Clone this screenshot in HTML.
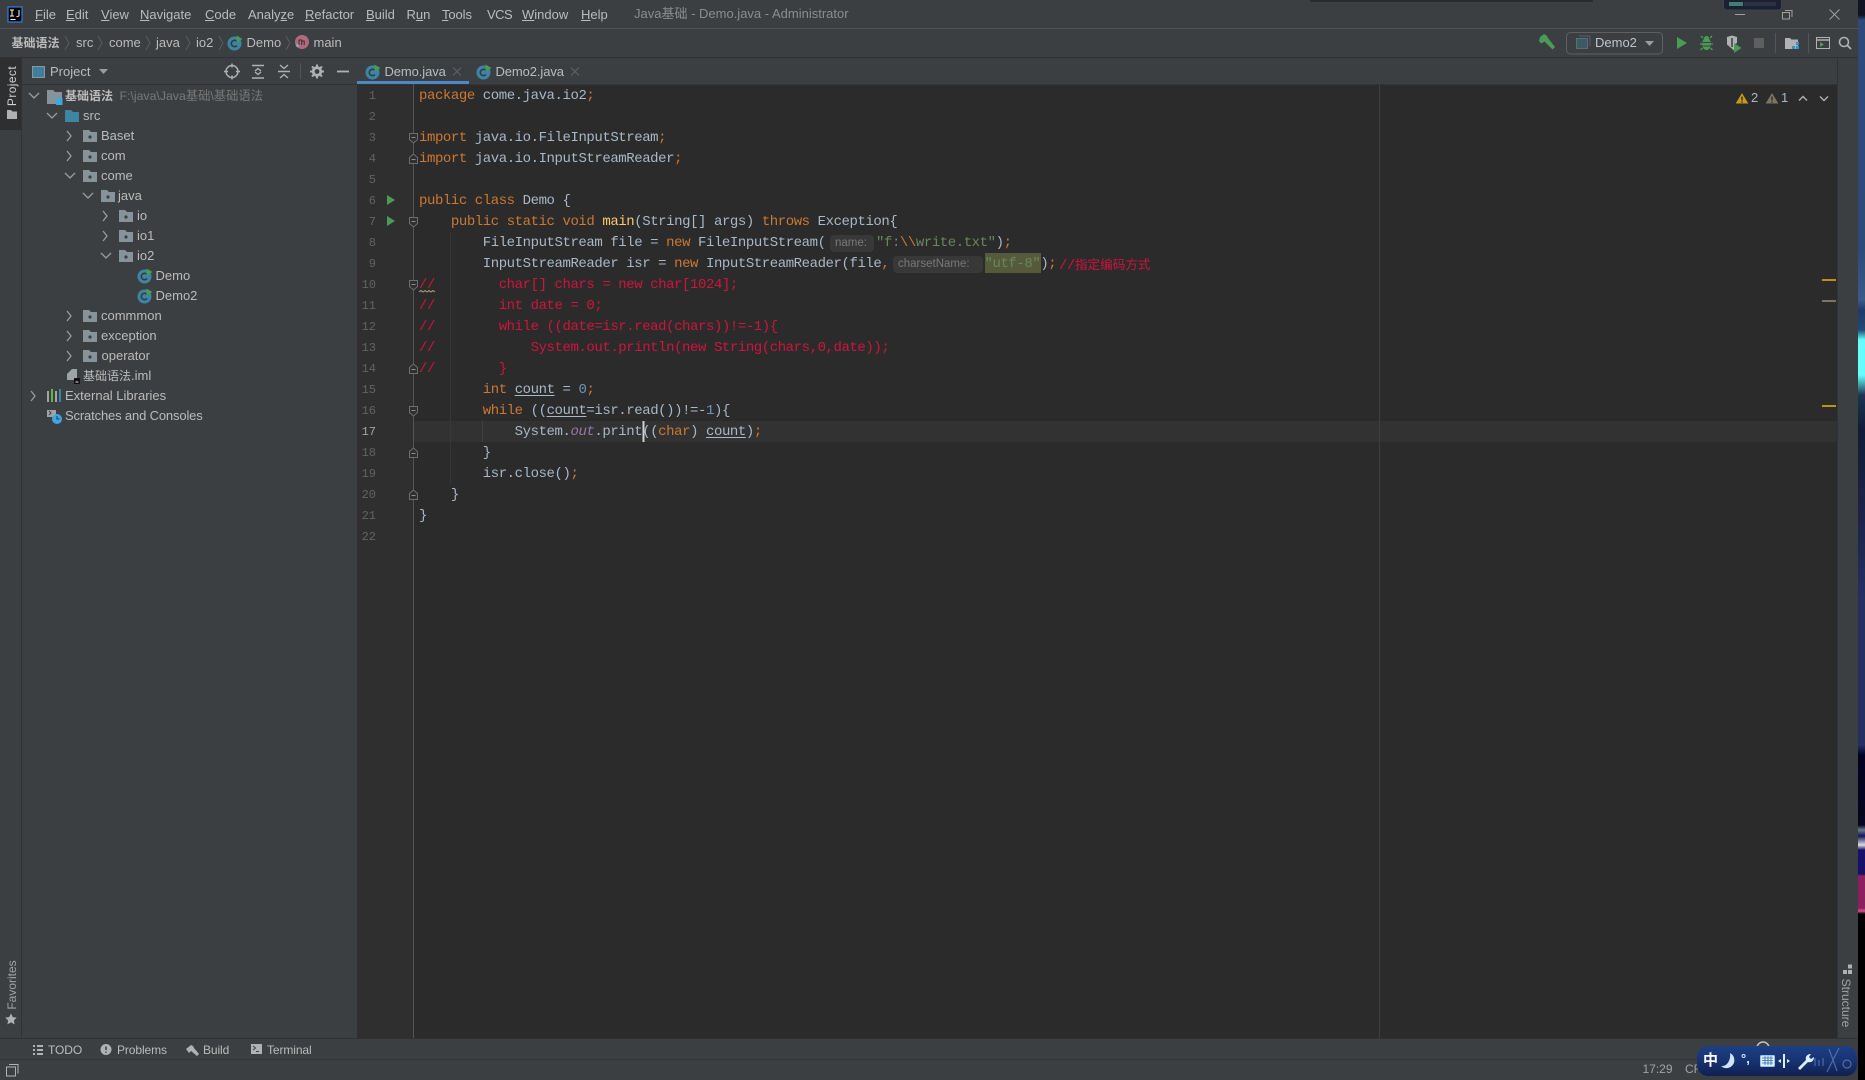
<!DOCTYPE html>
<html><head><meta charset="utf-8"><title>Java基础 - Demo.java - Administrator</title>
<style>
html,body{margin:0;padding:0;width:1865px;height:1080px;overflow:hidden;background:#3c3f41}
body{position:relative;font-family:"Liberation Sans","Noto Sans CJK SC",sans-serif;font-size:13px;color:#bbb}
.a{position:absolute;white-space:pre}
.t{position:absolute;white-space:pre;line-height:20px;height:20px}
.m{top:4.500px;color:#bbb}
.b{top:33px;color:#bbb}
.z{font-size:12px;font-weight:bold}
.l{position:absolute;left:419px;height:21px;line-height:21px;white-space:pre;font-family:"Liberation Mono","Noto Sans CJK SC",monospace;font-size:14px;letter-spacing:-.43px;color:#a9b7c6}
.n{position:absolute;left:350px;width:26px;text-align:right;height:21px;line-height:21px;font-family:"Liberation Mono",monospace;font-size:12px;color:#606366}
.k{color:#cc7832}.s{color:#6a8759}.d{color:#6897bb}.c{color:#d0143c}.y{color:#ffc66d}.o{color:#9876aa;font-style:italic}
u.v{text-decoration:underline;text-underline-offset:2px;text-decoration-thickness:1px}
.h{position:absolute;background:#383838;border-radius:4px;color:#787878;font-size:11.500px;line-height:17px;height:17px}
.tw{top:1040px;color:#bbb;font-size:12px;letter-spacing:-.1px}
</style></head><body>

<!-- backgrounds -->
<div class="a" style="left:0;top:28px;width:1858px;height:1px;background:#505355"></div>
<div class="a" style="left:0;top:57px;width:1858px;height:1px;background:#2f3133"></div>
<div class="a" style="left:0;top:58px;width:21px;height:72px;background:#2d2f30"></div>
<div class="a" style="left:21px;top:58px;width:1px;height:980px;background:#323232"></div>
<div class="a" style="left:22px;top:84px;width:335px;height:1px;background:#323232"></div>
<div class="a" style="left:357px;top:84px;width:1480px;height:954px;background:#2b2b2b"></div>
<div class="a" style="left:357px;top:84px;width:56px;height:954px;background:#2f2f30"></div>
<div class="a" style="left:357px;top:83.500px;width:1480px;height:1px;background:#323232"></div>
<div class="a" style="left:357px;top:81px;width:112px;height:3px;background:#4a88c7"></div>
<div class="a" style="left:413px;top:421px;width:1424px;height:21px;background:#323232"></div>
<div class="a" style="left:413px;top:84px;width:1px;height:954px;background:#555555"></div>
<div class="a" style="left:1379px;top:84px;width:1px;height:954px;background:#3f3f3f"></div>
<div class="a" style="left:450px;top:232px;width:1px;height:252px;background:#373737"></div>
<div class="a" style="left:482px;top:421px;width:1px;height:21px;background:#404040"></div>
<div class="a" style="left:1837px;top:58px;width:21px;height:980px;background:#3c3f41;border-left:1px solid #323232;box-sizing:border-box"></div>
<div class="a" style="left:0;top:1038px;width:1858px;height:1px;background:#323232"></div>
<div class="a" style="left:0;top:1059px;width:1858px;height:1px;background:#353739"></div>
<div class="a" style="left:1822px;top:279px;width:14px;height:2px;background:#be9117"></div>
<div class="a" style="left:1822px;top:300px;width:14px;height:2px;background:#7d7560"></div>
<div class="a" style="left:1822px;top:405px;width:14px;height:2px;background:#be9117"></div>

<!-- wallpaper -->
<div class="a" style="left:1858px;top:0;width:7px;height:1080px;background:linear-gradient(180deg,#101420 0,#101420 15px,#304a78 20px,#2c4a7c 250px,#3a5a8a 300px,#1f3a66 310px,#1f4a78 330px,#6ff 340px,#6ff 375px,#1c3550 395px,#111b33 430px,#1a2448 520px,#25305f 600px,#25305f 745px,#020220 755px,#06061c 825px,#6a7a88 830px,#15155a 836px,#ddd 845px,#15106a 850px,#15106a 874px,#8e1f5e 876px,#8e1f5e 908px,#e0508a 911px,#000 914px,#000 1080px)"></div>
<div class="a" style="left:1310px;top:0;width:283px;height:1.500px;background:#2a2c2e"></div>

<!-- icons -->
<svg class="a" style="left:0;top:0;overflow:visible" width="1865" height="1080" viewBox="0 0 1865 1080" fill="none">
<defs>
<symbol id="f" width="14" height="12" viewBox="0 0 14 12" overflow="visible"><path d="M0 0h6l2 2h6v10H0z" fill="#87939a"/><circle cx="7" cy="7" r="1.600" fill="#3c3f41"/></symbol>
<symbol id="c" width="16" height="16" viewBox="0 0 16 16" overflow="visible"><circle cx="7.500" cy="8.500" r="7" fill="#3d85a3"/><path d="M10 6.500a3.200 3.200 0 1 0 0 4" stroke="#2f3d45" stroke-width="1.600"/><path d="M9.500 0.500l6 3.500-6 3.500z" fill="#499c54"/></symbol>
<symbol id="fo" width="12" height="12" viewBox="0 0 12 12" overflow="visible"><path d="M1.500 1.500h8v6l-4 3.500-4-3.500z" fill="#2f2f30" stroke="#6c6f71"/><path d="M3.500 5.500h4" stroke="#8a8d8f"/></symbol>
<symbol id="fc" width="12" height="12" viewBox="0 0 12 12" overflow="visible"><path d="M1.500 10.500h8v-6l-4-3.500-4 3.500z" fill="#2f2f30" stroke="#6c6f71"/><path d="M3.500 6.500h4" stroke="#8a8d8f"/></symbol>
</defs>
<!-- logo -->
<rect x="8" y="7" width="14" height="15" fill="#000" stroke="#2f7fe0" stroke-width="1.200"/>
<path d="M10.500 19.500h5" stroke="#fff"/>
<path d="M10 10h4M12 10v6M10 16h4M19 10v5.500q0 1-2.500 1" stroke="#fff" stroke-width="1"/>
<!-- breadcrumb seps -->
<g stroke="#5a5d5f" stroke-width="1"><path d="M65 36l4 7-4 7M98 36l4 7-4 7M146 36l4 7-4 7M186 36l4 7-4 7M219 36l4 7-4 7M286 36l4 7-4 7"/></g>
<use href="#c" x="227" y="35"/>
<circle cx="302" cy="42" r="7" fill="#b06a7e"/><path d="M299 45v-5h2.700v5M301.700 41h2.500v4" stroke="#40282e" stroke-width="1"/>
<path d="M297.500 43.500l2 2-2 2-2-2z" fill="#9aa7b0"/>
<!-- left strip -->
<path d="M7 110h4l1.500 1.500H17V119H7z" fill="#afb1b3"/>
<path d="M11 1015.500l1.800 3.600 4 .5-2.900 2.800.7 4-3.600-2-3.600 2 .7-4-2.900-2.800 4-.5z" fill="#afb1b3" transform="translate(0,-2)"/>
<!-- tool header -->
<rect x="32.500" y="66.500" width="12" height="11" fill="#3d7f9e" stroke="#8f9699"/>
<path d="M99 69h9l-4.500 5z" fill="#9a9da0"/>
<g stroke="#afb1b3" stroke-width="1.400"><circle cx="232" cy="71.500" r="6"/><path d="M232 63.500v4M232 75.500v4M224 71.500h4M236 71.500h4"/></g>
<g stroke="#afb1b3" stroke-width="1.400"><path d="M252 65.500h12M252 78h12M255 71l3-2.500 3 2.500M255 72l3 2.500 3-2.500"/></g>
<g stroke="#afb1b3" stroke-width="1.400"><path d="M278 71.500h12M280 65l4 3.500 4-3.500M280 78l4-3.500 4 3.500"/></g>
<path d="M300.500 63v16" stroke="#515658"/>
<circle cx="317" cy="71.500" r="3.800" stroke="#afb1b3" stroke-width="2.800"/><path d="M317 64.500v2M317 76.500v2M310 71.500h2M322 71.500h2M312 66.500l1.500 1.500M320.500 75l1.500 1.500M312 76.500l1.500-1.500M320.500 68l1.500-1.500" stroke="#afb1b3" stroke-width="2"/>
<path d="M337 71.500h12" stroke="#afb1b3" stroke-width="1.800"/>
<!-- tabs -->
<use href="#c" x="365" y="64"/><use href="#c" x="476" y="64"/>
<path d="M453 67.500l8 8M461 67.500l-8 8M571 67.500l8 8M579 67.500l-8 8" stroke="#5d6062" stroke-width="1.200"/>
<!-- tree chevrons -->
<g stroke="#9a9da0" stroke-width="1.300">
<path d="M29 93l5 5 5-5M47 113l5 5 5-5"/>
<path d="M67 131l4 5-4 5M67 151l4 5-4 5M65 173l5 5 5-5M83 193l5 5 5-5M103 211l4 5-4 5M103 231l4 5-4 5M101 253l5 5 5-5"/>
<path d="M67 311l4 5-4 5M67 331l4 5-4 5M67 351l4 5-4 5M31 391l4 5-4 5"/>
</g>
<!-- root folder -->
<path d="M47 90h6l2 2h7v12H47z" fill="#87939a"/><rect x="56" y="98" width="6.500" height="7" fill="#3ea8de"/>
<path d="M65 110h6l2 2h6v10H65z" fill="#3d85a3"/>
<use href="#f" x="83" y="130"/><use href="#f" x="83" y="150"/><use href="#f" x="83" y="170"/>
<use href="#f" x="101" y="190"/><use href="#f" x="119" y="210"/><use href="#f" x="119" y="230"/><use href="#f" x="119" y="250"/>
<use href="#c" x="137" y="268"/><use href="#c" x="137" y="288"/>
<use href="#f" x="83" y="310"/><use href="#f" x="83" y="330"/><use href="#f" x="83" y="350"/>
<path d="M67 374l5-5h5v11H67z" fill="#9ea3a6"/><rect x="74" y="378" width="6" height="6" fill="#111"/><path d="M75.500 382h3" stroke="#ddd"/>
<g stroke-width="2"><path d="M48 391v11" stroke="#9ea3a6"/><path d="M52 389v13" stroke="#62b543"/><path d="M56 391v11" stroke="#9ea3a6"/><path d="M60 389v13" stroke="#3d85a3"/></g>
<path d="M47 410h9v7h-9z" fill="#9ea3a6"/><path d="M49 411l2 2-2 2" stroke="#3c3f41"/>
<circle cx="57" cy="419" r="5" fill="#3ea8de"/><path d="M57 416v3h2.500" stroke="#1d3a4d"/>
<!-- gutter -->
<path d="M387 195l8 5-8 5z" fill="#499c54"/><path d="M387 216l8 5-8 5z" fill="#499c54"/>
<use href="#fo" x="408" y="132"/><use href="#fc" x="408" y="153"/><use href="#fo" x="408" y="216"/><use href="#fo" x="408" y="279"/><use href="#fc" x="408" y="363"/><use href="#fo" x="408" y="405"/><use href="#fc" x="408" y="447"/><use href="#fc" x="408" y="489"/>
<path d="M419 292l2-1.500 2 1.500 2-1.500 2 1.500 2-1.500 2 1.500 2-1.500 2 1.500" stroke="#b0a070" stroke-width="1"/>
<!-- caret -->
<rect x="642.500" y="421" width="2" height="21" fill="#d0d0d0"/>
<!-- right toolbar -->
<path d="M1540 37l4-3 3 2 1 2 7 9-2.500 2.500-8-8-1.500 1-2 1-2-2.500z" fill="#499c54"/>
<rect x="1566.500" y="32.500" width="96" height="21.500" rx="4" stroke="#5e6062"/>
<path d="M1579 36h11v10" stroke="#5c6164"/><rect x="1576.500" y="38.500" width="11" height="10" fill="#3a5a68" stroke="#646a6d"/>
<path d="M1645 41h9l-4.500 5z" fill="#9a9da0"/>
<path d="M1677 37l10 6-10 6z" fill="#499c54"/>
<ellipse cx="1706.500" cy="44" rx="4.500" ry="6" fill="#499c54"/><circle cx="1706.500" cy="38.500" r="2.500" fill="#499c54"/>
<path d="M1701 36l2 2M1712 36l-2 2M1700 44h2M1711 44h2M1700.500 50l2-2M1712.500 50l-2-2" stroke="#499c54" stroke-width="1.300"/>
<path d="M1702.500 42.500h8M1702.500 46h8" stroke="#3c3f41"/>
<path d="M1727 37l5-1.500 5 1.500v6l-2 1v6l-1 .5-7-6z" fill="#afb1b3"/><path d="M1732 38v9" stroke="#3c3f41" stroke-width="1.500"/><path d="M1734 43l7.500 5-7.500 5z" fill="#499c54"/>
<rect x="1754" y="38" width="10" height="10" fill="#5e6060"/>
<path d="M1775.500 33v20M1808.500 33v20" stroke="#515658"/>
<path d="M1785 38h5l1.500 1.500H1798V49h-13z" fill="#afb1b3"/><rect x="1792" y="46" width="3" height="3" fill="#3592c4"/><rect x="1796" y="46" width="3" height="3" fill="#3592c4"/><rect x="1796" y="42" width="3" height="3" fill="#3592c4"/>
<rect x="1816.500" y="37.500" width="13" height="11" stroke="#afb1b3"/><path d="M1816 40h14" stroke="#afb1b3" stroke-width="1.500"/><path d="M1820 42l4 2.500-4 2.500z" fill="#499c54"/>
<circle cx="1844" cy="42" r="4.500" stroke="#afb1b3" stroke-width="1.600"/><path d="M1847.500 45.500l3.500 3.500" stroke="#afb1b3" stroke-width="1.800"/>
<!-- window ctrl -->
<path d="M1735 14.500h10" stroke="#9da0a2"/>
<rect x="1782.500" y="12.500" width="7" height="6.500" stroke="#9da0a2"/><path d="M1785 10.500h7v6.500" stroke="#9da0a2"/>
<path d="M1829.500 9.500l10 10M1839.500 9.500l-10 10" stroke="#9da0a2"/>
<rect x="1723.500" y="-2" width="58" height="12" rx="3" fill="#1c2030" stroke="#3a4055"/>
<path d="M1730 2v4M1732 2v4M1734 2v4M1736 2v4M1738 2v4M1740 2v4M1742 2v4" stroke="#5fe0c0"/>
<path d="M1745 2v4M1747 2v4M1749 2v4M1751 2v4M1753 2v4M1755 2v4M1757 2v4M1759 2v4M1761 2v4M1763 2v4M1765 2v4M1767 2v4M1769 2v4M1771 2v4M1773 2v4M1775 2v4" stroke="#3c4252"/>
<!-- warnings -->
<path d="M1742 93l6.300 10.500h-12.600z" fill="#c79a16"/><path d="M1742 96.500v4M1742 101.500v1.200" stroke="#2b2b2b" stroke-width="1.400"/>
<path d="M1772 93l6.300 10.500h-12.600z" fill="#7d7560"/><path d="M1772 96.500v4M1772 101.500v1.200" stroke="#2b2b2b" stroke-width="1.400"/>
<path d="M1799 100.500l4-4 4 4M1820 96.500l4 4 4-4" stroke="#afb1b3" stroke-width="1.400"/>
<!-- structure -->
<rect x="1843" y="970" width="4" height="4" fill="#afb1b3"/><rect x="1848" y="970" width="4" height="4" fill="#afb1b3"/><rect x="1848" y="964.500" width="4" height="4" fill="#afb1b3"/>
<!-- bottom icons -->
<path d="M33 1046h2M37 1046h6M33 1050h2M37 1050h6M33 1054h2M37 1054h6" stroke="#afb1b3" stroke-width="2"/>
<circle cx="106" cy="1049.500" r="5.500" fill="#afb1b3"/><path d="M106 1046.500v3.500M106 1051.500v1.200" stroke="#3c3f41" stroke-width="1.500"/>
<path d="M186 1049l5-4 2 1 1 2 5 6-2 2-6-5-2 2z" fill="#afb1b3"/>
<rect x="251" y="1044" width="11" height="10" fill="#afb1b3"/><path d="M253 1046l2.500 2-2.500 2M256 1051.500h3" stroke="#3c3f41"/>
<rect x="6.500" y="1067" width="9" height="9" stroke="#afb1b3"/><path d="M9 1064.500h9v9" stroke="#afb1b3"/>
<path d="M1757 1048a6 6 0 0 1 12 0" stroke="#c0c3c5" stroke-width="1.500"/>
</svg>

<!-- menu -->
<div class="t m" style="left:35px"><u>F</u>ile</div>
<div class="t m" style="left:66px"><u>E</u>dit</div>
<div class="t m" style="left:101px"><u>V</u>iew</div>
<div class="t m" style="left:140px"><u>N</u>avigate</div>
<div class="t m" style="left:205px"><u>C</u>ode</div>
<div class="t m" style="left:248px">Analy<u>z</u>e</div>
<div class="t m" style="left:305px"><u>R</u>efactor</div>
<div class="t m" style="left:366px"><u>B</u>uild</div>
<div class="t m" style="left:406.500px">R<u>u</u>n</div>
<div class="t m" style="left:442px;letter-spacing:-.1px"><u>T</u>ools</div>
<div class="t m" style="left:487px;letter-spacing:-.5px">VCS</div>
<div class="t m" style="left:522px"><u>W</u>indow</div>
<div class="t m" style="left:581px"><u>H</u>elp</div>
<div class="t" style="left:634px;top:4px;color:#8a8d8f">Java基础 - Demo.java - Administrator</div>

<!-- breadcrumbs -->
<div class="t b z" style="left:11.500px">基础语法</div>
<div class="t b" style="left:76px">src</div>
<div class="t b" style="left:109px">come</div>
<div class="t b" style="left:156px">java</div>
<div class="t b" style="left:196px">io2</div>
<div class="t b" style="left:246.500px">Demo</div>
<div class="t b" style="left:313.500px">main</div>
<div class="t" style="left:1595px;top:33px;color:#bbc5d0">Demo2</div>

<!-- side labels -->
<div class="a" style="left:12px;top:86px;transform:translate(-50%,-50%) rotate(-90deg);font-size:12px;color:#d0d0d0;letter-spacing:.4px">Project</div>
<div class="a" style="left:12px;top:985px;transform:translate(-50%,-50%) rotate(-90deg);font-size:12px;color:#9ea3a6">Favorites</div>
<div class="a" style="left:1846px;top:1003px;transform:translate(-50%,-50%) rotate(90deg);font-size:12px;color:#9ea3a6">Structure</div>

<!-- project header, tabs -->
<div class="t" style="left:50px;top:62px">Project</div>
<div class="t" style="left:384.500px;top:62px;letter-spacing:-.1px">Demo.java</div>
<div class="t" style="left:495.500px;top:62px;letter-spacing:-.1px">Demo2.java</div>

<!-- tree -->
<div class="t z" style="left:65px;top:86px">基础语法</div>
<div class="t" style="left:119.500px;top:86px;color:#787878;font-size:12.300px">F:\java\Java基础\基础语法</div>
<div class="t" style="left:83px;top:106px">src</div>
<div class="t" style="left:101px;top:126px">Baset</div>
<div class="t" style="left:101px;top:146px">com</div>
<div class="t" style="left:101px;top:166px">come</div>
<div class="t" style="left:118px;top:186px">java</div>
<div class="t" style="left:137px;top:206px">io</div>
<div class="t" style="left:137px;top:226px">io1</div>
<div class="t" style="left:137px;top:246px">io2</div>
<div class="t" style="left:155.500px;top:266px">Demo</div>
<div class="t" style="left:155.500px;top:286px">Demo2</div>
<div class="t" style="left:101px;top:306px">commmon</div>
<div class="t" style="left:101px;top:326px">exception</div>
<div class="t" style="left:101.500px;top:346px">operator</div>
<div class="t" style="left:83px;top:366px"><span style="font-size:12px">基础语法</span>.iml</div>
<div class="t" style="left:65px;top:386px">External Libraries</div>
<div class="t" style="left:65px;top:406px;letter-spacing:-.15px">Scratches and Consoles</div>

<!-- line numbers -->
<div class="n" style="top:86px">1</div><div class="n" style="top:107px">2</div><div class="n" style="top:128px">3</div><div class="n" style="top:149px">4</div><div class="n" style="top:170px">5</div><div class="n" style="top:191px">6</div><div class="n" style="top:212px">7</div><div class="n" style="top:233px">8</div><div class="n" style="top:254px">9</div><div class="n" style="top:275px">10</div><div class="n" style="top:296px">11</div><div class="n" style="top:317px">12</div><div class="n" style="top:338px">13</div><div class="n" style="top:359px">14</div><div class="n" style="top:380px">15</div><div class="n" style="top:401px">16</div><div class="n" style="top:422px;color:#a4a3a3">17</div><div class="n" style="top:443px">18</div><div class="n" style="top:464px">19</div><div class="n" style="top:485px">20</div><div class="n" style="top:506px">21</div><div class="n" style="top:527px">22</div>

<!-- code -->
<div class="l" style="top:86px"><span class="k">package</span> come.java.io2<span class="k">;</span></div>
<div class="l" style="top:128px"><span class="k">import</span> java.io.FileInputStream<span class="k">;</span></div>
<div class="l" style="top:149px"><span class="k">import</span> java.io.InputStreamReader<span class="k">;</span></div>
<div class="l" style="top:191px"><span class="k">public class</span> Demo {</div>
<div class="l" style="top:212px">    <span class="k">public static void</span> <span class="y">main</span>(String[] args) <span class="k">throws</span> Exception{</div>
<div class="l" style="top:233px">        FileInputStream file = <span class="k">new</span> FileInputStream(</div>
<div class="h" style="left:830px;top:234.500px;width:39px;padding-left:5px">name:</div>
<div class="l" style="top:233px;left:876px"><span class="s">"f:<span class="k">\\</span>write.txt"</span>)<span class="k">;</span></div>
<div class="l" style="top:254px">        InputStreamReader isr = <span class="k">new</span> InputStreamReader(file<span class="k">,</span></div>
<div class="h" style="left:893px;top:255.500px;width:85px;padding-left:5px">charsetName:</div>
<div class="a" style="left:985px;top:253px;width:56px;height:20px;background:#555a3c"></div>
<div class="l" style="top:254px;left:984.500px"><span class="s">"utf-8"</span>)<span class="k">;</span></div>
<div class="a c" style="left:1059px;top:253px;line-height:21px;font-family:'Liberation Mono','Noto Sans CJK SC',monospace;font-size:14px;letter-spacing:-.43px">//<span style="font-family:'Noto Sans CJK SC',sans-serif;font-size:12.600px;letter-spacing:0">指定编码方式</span></div>
<div class="l c" style="top:275px">//        char[] chars = new char[1024];</div>
<div class="l c" style="top:296px">//        int date = 0;</div>
<div class="l c" style="top:317px">//        while ((date=isr.read(chars))!=-1){</div>
<div class="l c" style="top:338px">//            System.out.println(new String(chars,0,date));</div>
<div class="l c" style="top:359px">//        }</div>
<div class="l" style="top:380px">        <span class="k">int</span> <u class="v">count</u> = <span class="d">0</span><span class="k">;</span></div>
<div class="l" style="top:401px">        <span class="k">while</span> ((<u class="v">count</u>=isr.read())!=-<span class="d">1</span>){</div>
<div class="l" style="top:422px">            System.<span class="o">out</span>.print((<span class="k">char</span>) <u class="v">count</u>)<span class="k">;</span></div>
<div class="l" style="top:443px">        }</div>
<div class="l" style="top:464px">        isr.close()<span class="k">;</span></div>
<div class="l" style="top:485px">    }</div>
<div class="l" style="top:506px">}</div>

<!-- warning counts -->
<div class="t" style="left:1751px;top:88px;color:#a9b7c6">2</div>
<div class="t" style="left:1781px;top:88px;color:#a9b7c6">1</div>

<!-- bottom tool labels -->
<div class="t tw" style="left:48px">TODO</div>
<div class="t tw" style="left:117px">Problems</div>
<div class="t tw" style="left:203px">Build</div>
<div class="t tw" style="left:267px">Terminal</div>
<div class="t" style="left:1642.500px;top:1059px;font-size:12px;color:#a0a3a5">17:29</div>
<div class="t" style="left:1685px;top:1059px;font-size:12px;color:#a0a3a5">CR</div>

<!-- IME bar -->
<div class="a" style="left:1697px;top:1046px;width:160px;height:30px;border-radius:11px;background:linear-gradient(180deg,#1d3f85 0,#183272 50%,#0f2050 100%)"></div>
<svg class="a" style="left:1697px;top:1046px" width="160" height="30" viewBox="0 0 160 30" fill="none">
<path d="M33 7a8 8 0 0 1-2 15 8 8 0 0 1-7-2c6 1 10-6 9-13z" fill="#cfe6fa"/>
<rect x="63.500" y="9.500" width="14" height="11" rx="1" fill="#dcefff" stroke="#9ac4ea"/>
<path d="M65 12h11M65 14.500h11M65 17h11M68 10v9M71 10v9M74 10v9" stroke="#3a6aa8" stroke-width=".8"/>
<path d="M87 8v14" stroke="#dcefff" stroke-width="2"/><path d="M84 13l-3 2 3 2zM90 13l3 2-3 2z" fill="#dcefff"/>
<path d="M101 22l8-8c-1-3 1-6 5-6l-2 3 2 2 3-2c0 4-3 6-6 5l-8 8z" fill="#dcefff"/>
<g stroke="#6b84b8" stroke-width="1.200" opacity=".7"><path d="M132 3l8 22M142 2l-12 24"/><circle cx="150" cy="18" r="4"/><path d="M118 12v8M122 14v6M126 12v8"/></g>
</svg>
<div class="a" style="left:1703px;top:1052px;font-size:15px;line-height:18px;font-weight:bold;color:#fff">中</div>
<div class="a" style="left:1741px;top:1050px;font-size:13px;line-height:18px;font-weight:bold;color:#dcefff">°,</div>

</body></html>
